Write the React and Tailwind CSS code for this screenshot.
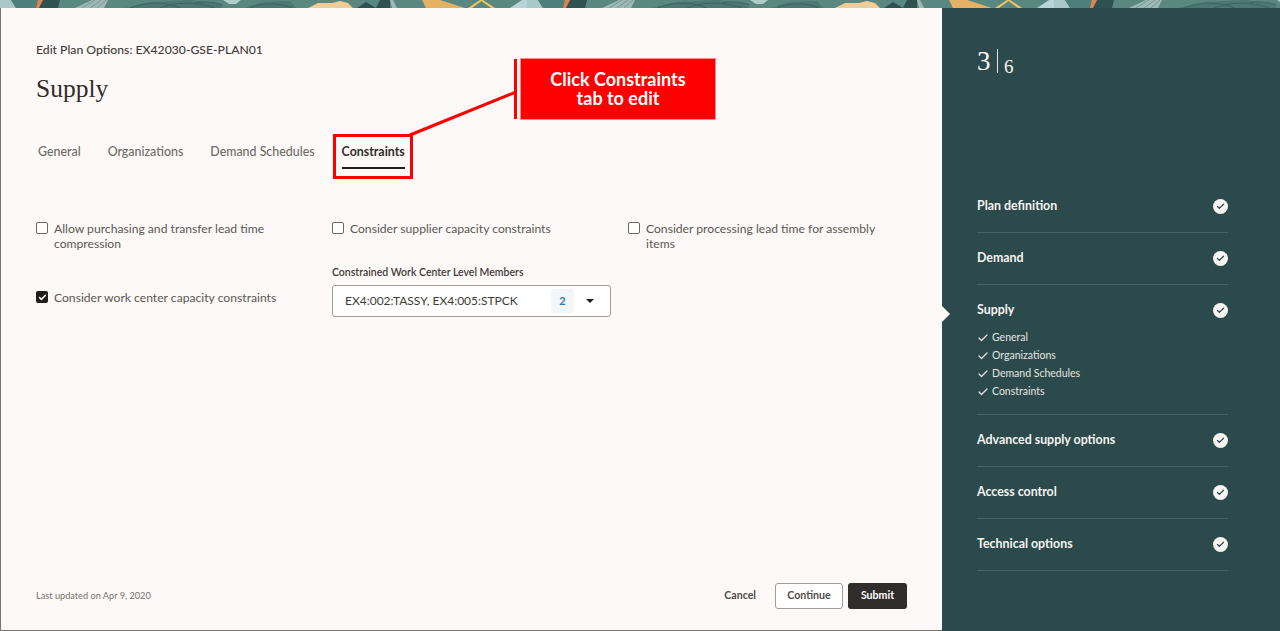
import React from 'react';
import { Check } from 'lucide-react';

const tabs = ['General', 'Organizations', 'Demand Schedules', 'Constraints'];

const steps = [
  { name: 'Plan definition' },
  { name: 'Demand' },
  { name: 'Supply', subs: ['General', 'Organizations', 'Demand Schedules', 'Constraints'] },
  { name: 'Advanced supply options' },
  { name: 'Access control' },
  { name: 'Technical options' },
];

// one tile of the banner artwork, 527px wide
const BannerTile = ({ x }) => (
  <g transform={`translate(${x} 0)`}>
    <rect width="527" height="8" fill="#5b8781" />
    <polygon points="0,0 11,0 16,8 0,8" fill="#a9c9c8" />
    <polygon points="11,0 36,0 40,8 16,8" fill="#4f7f7a" />
    <polygon points="43,0 60,0 58,8 38,8" fill="#2f5152" />
    <polygon points="38,0 43,0 39,8 36,8" fill="#e0824f" />
    <polygon points="75,8 92,0 108,0 104,8" fill="#9db9b5" />
    <path d="M82 8L95 0M90 8L101 0M97 8L106 0" stroke="#6f918c" strokeWidth="0.8" />
    <polygon points="125,8 150,2 190,0 222,4 222,8" fill="#4c7772" />
    <path d="M130 8C145 2 165 1 180 8M160 8C175 2 195 1 215 8M195 3C205 1 215 2 222 5" stroke="#37605c" strokeWidth="0.8" fill="none" />
    <polygon points="223,0 241,0 236,4 229,4" fill="#aecdcd" />
    <polygon points="244,8 262,2 290,1 296,8" fill="#4c7772" />
    <path d="M250 8C262 3 278 2 292 8" stroke="#37605c" strokeWidth="0.8" fill="none" />
    <polygon points="308,8 318,3 332,3 340,1 348,3 353,8" fill="#f0cc96" />
    <polygon points="357,8 366,2 376,8" fill="#2f5152" />
    <polygon points="376,8 380,0 390,0 390,8" fill="#2f5152" />
    <polygon points="390,0 393,0 397,8 392,8" fill="#9db9b5" />
    <polygon points="422,0 440,0 465,8 426,8" fill="#e5b263" />
    <polygon points="468,8 480,0 483,0 472,8" fill="#f3c65c" />
    <polygon points="480,0 483,0 495,8 491,8" fill="#f3c65c" />
    <polygon points="522,0 536,0 541,8 510,8" fill="#b9d4d8" />
  </g>
);

const Box = ({ checked }) =>
  checked ? (
    <span className="mt-[1px] flex h-[12px] w-[12px] shrink-0 items-center justify-center rounded-[2px] bg-[#201e1c]">
      <Check className="h-[9px] w-[9px] text-white" strokeWidth={4} />
    </span>
  ) : (
    <span className="mt-[1px] h-[12px] w-[12px] shrink-0 rounded-[2px] border border-[#6b6763] bg-white" />
  );

const Option = ({ checked, children }) => (
  <label className="flex gap-[6px] text-[12.15px] leading-[15px] text-[#5b5753]">
    <Box checked={checked} />
    <span>{children}</span>
  </label>
);

const App = () => {
  return (
    <div className="relative flex h-[631px] w-[1280px] flex-col overflow-hidden bg-[#fcf9f8] font-['Lato',sans-serif]">
      <svg className="block h-[8px] w-full shrink-0" viewBox="0 0 1280 8" aria-hidden="true">
        <BannerTile x={0} />
        <BannerTile x={527} />
        <BannerTile x={1054} />
      </svg>

      <div className="flex min-h-0 flex-1">
        <main className="flex w-[942px] flex-col border-b border-l border-[#77726e] pl-[35px] pr-[35px]">
          <div className="pt-[35px] text-[12.2px] font-medium leading-[14px] text-[#3f3b38]">
            Edit Plan Options: EX42030-GSE-PLAN01
          </div>
          <h1 className="mt-[17px] font-['Liberation_Serif',serif] text-[25.5px] leading-[30px] text-[#312d2a]">Supply</h1>

          <nav className="mt-[40px] flex gap-[27px] pl-[2px] text-[12.4px] font-medium leading-[16px] text-[#6f6b67]">
            {tabs.map((tab) => (
              <div key={tab} className={tab === 'Constraints' ? 'border-b-2 border-[#201e1c] pb-[7px] font-bold text-[#312d2a]' : 'pb-[7px]'}>
                {tab}
              </div>
            ))}
          </nav>

          <div className="mt-[52px] grid grid-cols-[296px_296px_262px]">
            <div className="flex flex-col gap-[39px] pr-[20px]">
              <Option>Allow purchasing and transfer lead time compression</Option>
              <Option checked>Consider work center capacity constraints</Option>
            </div>
            <div className="flex flex-col">
              <Option>Consider supplier capacity constraints</Option>
              <div className="mt-[29px] text-[10.5px] font-semibold leading-[14px] text-[#3f3b38]">
                Constrained Work Center Level Members
              </div>
              <div className="mt-[6px] flex h-[32px] w-[279px] items-center rounded-[3px] border border-[#a19d99] bg-white pl-[12px] pr-[16px] text-[12px] text-[#3f3b38]">
                <span className="flex-1">EX4:002:TASSY, EX4:005:STPCK</span>
                <span className="mr-[12px] flex h-[24px] w-[23px] items-center justify-center rounded-[4px] bg-[#f1f6f8] text-[11px] font-bold text-[#2f7bab]">2</span>
                <span className="h-0 w-0 border-x-[4px] border-t-[4px] border-x-transparent border-t-[#201e1c]" />
              </div>
            </div>
            <div>
              <Option>Consider processing lead time for assembly items</Option>
            </div>
          </div>

          <footer className="mt-auto flex items-center justify-between pb-[21px]">
            <span className="-mt-[1px] text-[9.2px] text-[#77726e]">Last updated on Apr 9, 2020</span>
            <div className="flex items-center text-[10.6px] font-bold">
              <span className="mr-[19px] text-[#4f4b48]">Cancel</span>
              <span className="mr-[5px] flex h-[26px] w-[68px] items-center justify-center rounded-[3px] border border-[#a19d99] bg-white text-[#4f4b48]">Continue</span>
              <span className="flex h-[26px] w-[59px] items-center justify-center rounded-[3px] bg-[#312d2a] text-white">Submit</span>
            </div>
          </footer>
        </main>

        <aside className="relative flex w-[338px] flex-col bg-[#2c4a4b] pl-[35px] pr-[52px]">
          <div className="flex h-[173px] items-start pt-[38px] font-['Liberation_Serif',serif] text-[#f7f5f2]">
            <span className="text-[27px] leading-[30px]">3</span>
            <span className="ml-[6px] mr-[6px] mt-[3px] h-[24px] w-[1.5px] bg-[#e8e6e2]" />
            <span className="mt-[9px] text-[19px] leading-[24px]">6</span>
          </div>
          {steps.map((step) => (
            <div key={step.name} className="border-b border-[#46625f] pb-[18px] pt-[17px] text-[#f5f3f0]">
              <div className="flex h-[16px] items-center justify-between">
                <span className="text-[12.4px] font-bold">{step.name}</span>
                <span className="flex h-[15px] w-[15px] items-center justify-center rounded-full bg-[#f7f5f2]">
                  <Check className="h-[9px] w-[9px] text-[#2c4a4b]" strokeWidth={3.5} />
                </span>
              </div>
              {step.subs && (
                <ul className="-mb-[5px] mt-[11px]">
                  {step.subs.map((sub) => (
                    <li key={sub} className="flex h-[18px] items-center gap-[3px] text-[10.5px] text-[#e4e4e0]">
                      <Check className="h-[12px] w-[12px]" strokeWidth={2.5} />
                      {sub}
                    </li>
                  ))}
                </ul>
              )}
            </div>
          ))}
          <span className="absolute left-0 top-[298px] h-0 w-0 border-y-[8px] border-l-[8px] border-y-transparent border-l-[#fcf9f8]" />
        </aside>
      </div>

      {/* callout over the tabs */}
      <div className="absolute left-[333px] top-[134px] h-[45px] w-[80px] border-[3px] border-[#ff0000]" />
      <svg className="absolute left-0 top-0 h-[631px] w-[1280px]" viewBox="0 0 1280 631" fill="none" aria-hidden="true">
        <line x1="410" y1="135" x2="516" y2="92" stroke="#ff0000" strokeWidth="3" />
      </svg>
      <div className="absolute left-[514px] top-[59px] h-[60px] w-[3px] bg-[#ff0000]" />
      <div className="absolute left-[520px] top-[58px] flex h-[62px] w-[196px] items-center justify-center border border-[#ff8a8a] bg-[#ff0000] px-[24px] text-center text-[18px] font-bold leading-[19px] text-white">
        Click Constraints tab to edit
      </div>
    </div>
  );
};

export default App;
